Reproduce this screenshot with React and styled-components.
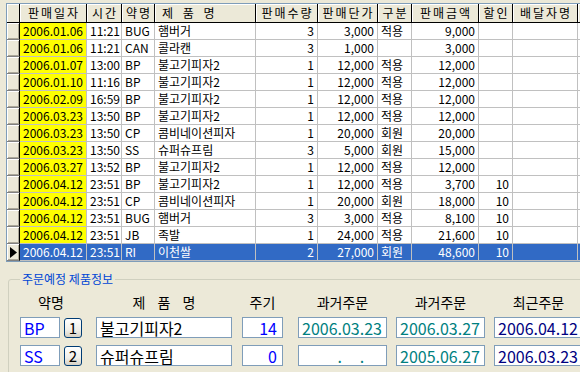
import React from 'react';
import styled, { createGlobalStyle } from 'styled-components';

const Global = createGlobalStyle`
  html, body { margin: 0; padding: 0; background: #ECE9D8; overflow: hidden; }
  body { font-family: "Noto Sans CJK KR", "Noto Sans", sans-serif; }
`;

const COLS = [13, 67, 35, 33, 101, 62, 60, 34, 67, 34, 65, 40];

const Page = styled.div`
  width: 580px;
  height: 372px;
  box-sizing: border-box;
  padding: 3px 0 0 6px;
  overflow: hidden;
`;

const Table = styled.div`
  display: grid;
  grid-template-columns: ${COLS.map((c) => c + 'px').join(' ')};
  grid-template-rows: 19px;
  grid-auto-rows: 17px;
  width: max-content;
  border: 1px solid #7F9DB9;
  border-right: none;
  background: #fff;
`;

const HeadCell = styled.div`
  box-sizing: border-box;
  background: #ECE9D8;
  border-right: 1px solid #000;
  border-bottom: 1px solid #000;
  box-shadow: inset 1px 1px 0 #fff;
  display: flex;
  align-items: center;
  justify-content: ${(p) => (p.$left ? 'flex-start' : 'center')};
  padding-left: ${(p) => (p.$left ? '7px' : '2px')};
  font-size: 12px;
  letter-spacing: 2px;
  word-spacing: 3px;
  color: #000;
  white-space: pre;
  overflow: hidden;
  line-height: 1;
`;

const RowHead = styled.div`
  box-sizing: border-box;
  background: #ECE9D8;
  border-right: 1px solid #000;
  border-bottom: 1px solid #808080;
  box-shadow: inset 1px 1px 0 #fff, inset -1px -1px 0 #ACA899;
  display: flex;
  align-items: center;
  justify-content: center;
`;

const Cell = styled.div`
  box-sizing: border-box;
  border-right: 1px solid #C0C0C0;
  border-bottom: 1px solid #C0C0C0;
  background: ${(p) => (p.$sel ? '#316AC5' : p.$yellow ? '#FFFF00' : '#fff')};
  color: ${(p) => (p.$sel ? '#fff' : '#000')};
  display: flex;
  align-items: center;
  justify-content: ${(p) => (p.$right ? 'flex-end' : 'flex-start')};
  padding: 0 3px;
  font-size: 12px;
  white-space: nowrap;
  overflow: hidden;
  line-height: 1;
`;

const Group = styled.fieldset`
  margin: 10px 0 0 2px;
  border: 1px solid #D0D0BF;
  border-radius: 3px;
  padding: 8px 0 12px 11px;
  width: 600px;
  box-sizing: border-box;
`;

const Legend = styled.legend`
  font-size: 12px;
  line-height: 14px;
  color: #0046D5;
  padding: 0 2px;
  margin: 0;
`;

const Form = styled.div`
  display: grid;
  grid-template-columns: 44px 32px 146px 56px 98px 98px 89px;
  grid-template-rows: 16px 21px 21px;
  row-gap: 7px;
  align-items: center;
`;

const Label = styled.div`
  grid-column: span ${(p) => p.$span || 1};
  width: ${(p) => p.$w}px;
  text-align: center;
  font-size: 14px;
  line-height: 16px;
  color: #000;
  white-space: pre;
  word-spacing: ${(p) => p.$ws || 0}px;
`;

const Box = styled.div`
  box-sizing: border-box;
  width: ${(p) => p.$w}px;
  height: 21px;
  border: 1px solid #7F9DB9;
  background: #fff;
  color: ${(p) => p.$color || '#000'};
  font-size: 16px;
  line-height: 1;
  display: flex;
  align-items: center;
  justify-content: ${(p) => (p.$right ? 'flex-end' : 'flex-start')};
  padding: 0 ${(p) => (p.$right ? '5px' : '0')} 0 3px;
  white-space: pre;
  overflow: hidden;
`;

const Ghost = styled.span`
  color: transparent;
`;

const NumButton = styled.div`
  box-sizing: border-box;
  width: 18px;
  height: 20px;
  border: 1px solid #003C74;
  border-radius: 3px;
  background: linear-gradient(#FFFFFF, #F0F0EA 60%, #D6D0C5);
  display: flex;
  align-items: center;
  justify-content: center;
  font-size: 15px;
  line-height: 1;
  color: #000;
`;

const Arrow = () => (
  <svg width="7" height="11" viewBox="0 0 7 11">
    <polygon points="0,0 7,5.5 0,11" fill="#000" />
  </svg>
);

const HEAD = ['판매일자', '시간', '약명', '제 품 명', '판매수량', '판매단가', '구분', '판매금액', '할인', '배달자명', ''];
const RIGHT = [false, false, false, false, true, true, false, true, true, false, false];

const ROWS = [
  ['2006.01.06', '11:21', 'BUG', '햄버거', '3', '3,000', '적용', '9,000', '', ''],
  ['2006.01.06', '11:21', 'CAN', '콜라캔', '3', '1,000', '', '3,000', '', ''],
  ['2006.01.07', '13:00', 'BP', '불고기피자2', '1', '12,000', '적용', '12,000', '', ''],
  ['2006.01.10', '11:16', 'BP', '불고기피자2', '1', '12,000', '적용', '12,000', '', ''],
  ['2006.02.09', '16:59', 'BP', '불고기피자2', '1', '12,000', '적용', '12,000', '', ''],
  ['2006.03.23', '13:50', 'BP', '불고기피자2', '1', '12,000', '적용', '12,000', '', ''],
  ['2006.03.23', '13:50', 'CP', '콤비네이션피자', '1', '20,000', '회원', '20,000', '', ''],
  ['2006.03.23', '13:50', 'SS', '슈퍼슈프림', '3', '5,000', '회원', '15,000', '', ''],
  ['2006.03.27', '13:52', 'BP', '불고기피자2', '1', '12,000', '적용', '12,000', '', ''],
  ['2006.04.12', '23:51', 'BP', '불고기피자2', '1', '12,000', '적용', '3,700', '10', ''],
  ['2006.04.12', '23:51', 'CP', '콤비네이션피자', '1', '20,000', '회원', '18,000', '10', ''],
  ['2006.04.12', '23:51', 'BUG', '햄버거', '3', '3,000', '적용', '8,100', '10', ''],
  ['2006.04.12', '23:51', 'JB', '족발', '1', '24,000', '적용', '21,600', '10', ''],
  ['2006.04.12', '23:51', 'RI', '이천쌀', '2', '27,000', '회원', '48,600', '10', ''],
];
const SELECTED = 13;

export default function App() {
  return (
    <Page>
      <Global />
      <Table>
        <HeadCell />
        {HEAD.map((h, i) => (
          <HeadCell key={'h' + i} $left={h === '제 품 명'}>{h}</HeadCell>
        ))}
        {ROWS.map((r, ri) => {
          const sel = ri === SELECTED;
          return (
            <React.Fragment key={'r' + ri}>
              <RowHead>{sel && <Arrow />}</RowHead>
              {[...r, ''].map((v, ci) => (
                <Cell key={ci} $sel={sel} $yellow={ci === 0} $right={RIGHT[ci]}>{v}</Cell>
              ))}
            </React.Fragment>
          );
        })}
      </Table>
      <Group>
        <Legend>주문예정 제품정보</Legend>
        <Form>
          <Label $span={2} $w={62}>약명</Label>
          <Label $w={136} $ws={9}>제 품 명</Label>
          <Label $w={41}>주기</Label>
          <Label $w={89}>과거주문</Label>
          <Label $w={89}>과거주문</Label>
          <Label $w={89}>최근주문</Label>

          <Box $w={40} $color="#0000FF">BP</Box>
          <NumButton>1</NumButton>
          <Box $w={136}>불고기피자2</Box>
          <Box $w={41} $color="#0000FF" $right>14</Box>
          <Box $w={89} $color="#008080">2006.03.23</Box>
          <Box $w={89} $color="#008080">2006.03.27</Box>
          <Box $w={89} $color="#000080">2006.04.12</Box>

          <Box $w={40} $color="#0000FF">SS</Box>
          <NumButton>2</NumButton>
          <Box $w={136}>슈퍼슈프림</Box>
          <Box $w={41} $color="#0000FF" $right>0</Box>
          <Box $w={89} $color="#008080"><Ghost>2006</Ghost>.<Ghost>00</Ghost>.<Ghost>00</Ghost></Box>
          <Box $w={89} $color="#008080">2005.06.27</Box>
          <Box $w={89} $color="#000080">2006.03.23</Box>
        </Form>
      </Group>
    </Page>
  );
}
